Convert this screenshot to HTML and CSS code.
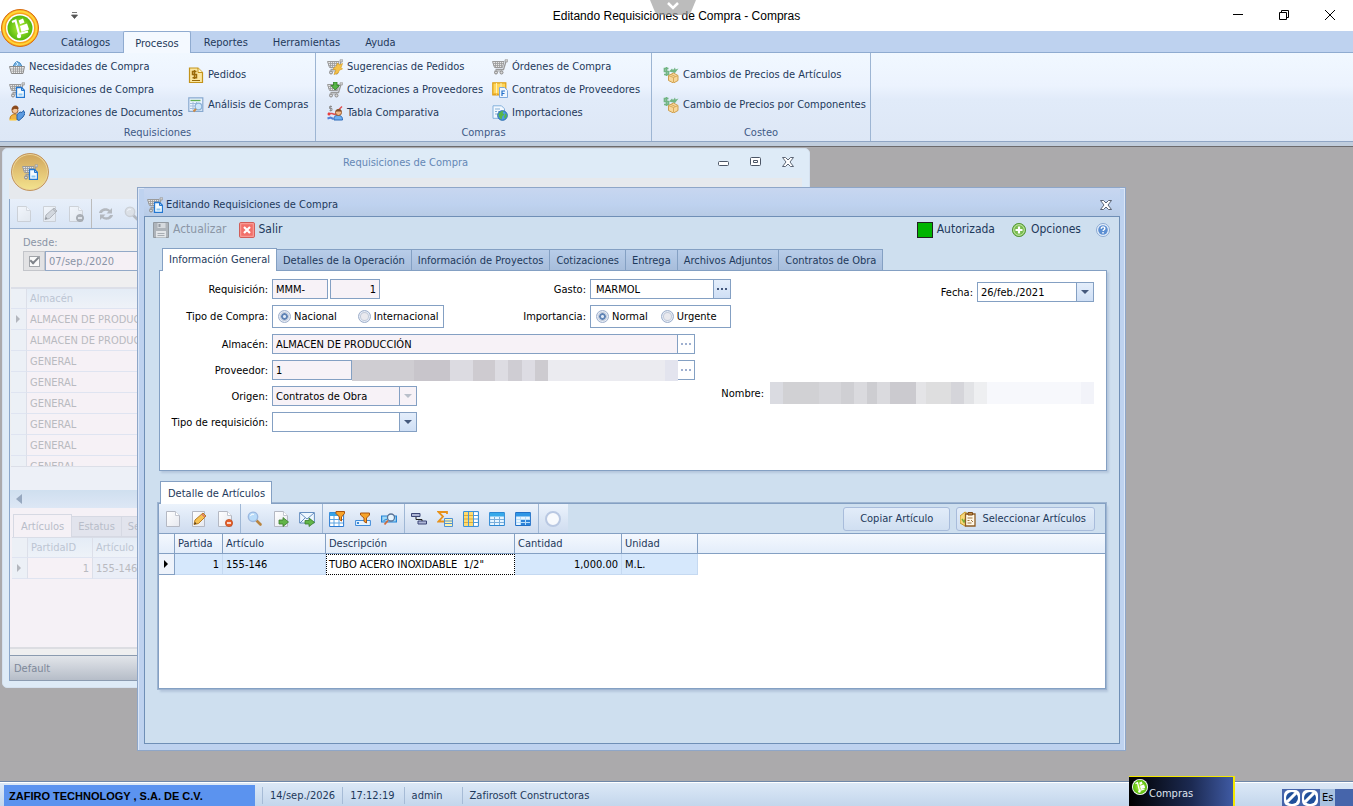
FILE: index.html
```html
<!DOCTYPE html>
<html lang="es">
<head>
<meta charset="utf-8">
<meta name="viewport" content="width=device-width, initial-scale=1">
<title>Editando Requisiciones de Compra - Compras</title>
<link rel="stylesheet" href="styles.css">
</head>
<body>
<svg class="defs" aria-hidden="true">
  <defs>
    <linearGradient id="page" x1="0" y1="0" x2="1" y2="1"><stop offset="0" stop-color="#fff"/><stop offset="1" stop-color="#e6e8ef"/></linearGradient>
    <radialGradient id="lime"><stop offset="0" stop-color="#b6f03a"/><stop offset="1" stop-color="#55b80c"/></radialGradient>
  </defs>
  <symbol id="cart" viewBox="0 0 16 16">
    <path d="M0.5 2.500h11.500l-1.500 6h-8z" fill="#e6e6e6" stroke="#9a9a9a"/>
    <path d="M1 4.500h10M1.500 6.500h9M3.500 3v5M5.500 3v5M7.500 3v5M9.500 3v5" stroke="#9a9a9a" stroke-width=".8"/>
    <path d="M14 2.500l-2.500 8h-8" fill="none" stroke="#9a9a9a" stroke-width="1.300"/><path d="M13 .8h2.800v2H13z" fill="#ddd" stroke="#9a9a9a" stroke-width=".8"/>
    <path d="M2.500 12h8" stroke="#b0b0b0" stroke-width="1.200"/>
    <circle cx="4" cy="13.500" r="1.500" fill="#d8d8d8" stroke="#888"/><circle cx="9.500" cy="13.500" r="1.500" fill="#d8d8d8" stroke="#888"/>
  </symbol>
  <symbol id="bluedoc" viewBox="0 0 16 16">
    <path d="M7.500 5.500h5l3 3v7h-8z" fill="#f4fbff" stroke="#2377d1" stroke-width="1.300"/>
    <path d="M12.500 5.500v3h3" fill="none" stroke="#2377d1"/><path d="M9.500 11.500h4v2h-4z" fill="#8cc8f5"/>
  </symbol>
  <symbol id="cartdoc" viewBox="0 0 16 16"><use href="#cart"/><use href="#bluedoc"/></symbol>
  <symbol id="basket" viewBox="0 0 16 16">
    <path d="M4 7.500l2-3.500 2-1.500 3 1.500 2 3.500" fill="#7cb6e4" stroke="#3f86bf"/><path d="M7 3l2 2-2 2" stroke="#d8efff" fill="none"/>
    <path d="M.5 7.500h15l-1.500 7h-11.500z" fill="#ececec" stroke="#8a8a8a"/>
    <path d="M2 10h13M2.500 12.200h11.500M4.500 8v6M6.500 8v6M8.500 8v6M10.500 8v6M12.500 8v6" stroke="#999" stroke-width=".8"/>
  </symbol>
  <symbol id="person" viewBox="0 0 16 16">
    <path d="M1 14.500c0-4 2-5 4.500-5s4.500 1 4.500 5z" fill="#f2b340" stroke="#c37d10"/>
    <circle cx="6" cy="5.500" r="3" fill="#f4c69a" stroke="#a0602c"/><path d="M2.500 5c0-3 2-4.500 4-4.500s3.500 2 3 3.500c-2.500.5-4-1-5 .5z" fill="#8a4a1e"/>
    <path d="M8 9.500l3-2.500 2 .5 1.500-2 1.500 3-2 3.500-4 3.500-2-1z" fill="#5c9be0" stroke="#2560a8"/><path d="M.5 14.800h7" stroke="#ffcb3d" stroke-width="1.500"/>
  </symbol>
  <symbol id="money" viewBox="0 0 16 16">
    <path d="M1.500 1h8.500l4.500 4.500v10h-13z" fill="#fbe6a0" stroke="#c3931b" stroke-width="1.200"/><path d="M10 1v4.500h4.500" fill="#fff5cf" stroke="#c3931b"/>
    <path d="M8.500 4.500H4.500v3h4v3.200h-4M6.500 3v9" fill="none" stroke="#9a6a08" stroke-width="1.500"/><path d="M4 13.500h8" stroke="#9a6a08"/>
  </symbol>
  <symbol id="analysis" viewBox="0 0 16 16">
    <path d="M.8.800h14v13.500h-14z" fill="#eaf4ff" stroke="#88a9cf" stroke-width="1.200"/><path d="M2.500 3.500h10" stroke="#5fb052" stroke-width="1.300"/>
    <path d="M2 6.500h11M2 9h11M2 11.500h11M5 5v8M8.500 5v8" stroke="#a2bcdb"/><circle cx="10.500" cy="9.500" r="3.300" fill="#cfe7fa" stroke="#8bb2d8" stroke-width="1.200"/>
    <path d="M8 12l-2.500 2.500" stroke="#cc8844" stroke-width="2"/>
  </symbol>
  <symbol id="cartbolt" viewBox="0 0 16 16"><use href="#cart"/><path d="M10.500 4l-1 3-3.500 3 3 1-2 4.500 4-1.500 1.500-3 3-1-1.500-1.500 1.500-4-3 1.500z" fill="#f5c24a" stroke="#dba026" stroke-width=".7"/></symbol>
  <symbol id="cartdown" viewBox="0 0 16 16"><use href="#cart"/><path d="M6.500 0h3.500v3.500h2.500L8.200 8 4 3.500h2.500z" fill="#57b546" stroke="#2d7d22" stroke-width=".8"/></symbol>
  <symbol id="compare" viewBox="0 0 16 16">
    <path d="M5 1.500H2.500V3.500H5V5.500H2.500M3.700.5v6" fill="none" stroke="#8a8a8a" stroke-width=".9"/>
    <path d="M1 8.500h4l3 1 4-5 3-3" stroke="#e05050" fill="none" stroke-width="1.500"/><circle cx="2" cy="9" r="1.500" fill="#e83c3c"/><path d="M.5 13.500l3-1 3 1.500" stroke="#5080d8" stroke-width="2" fill="none"/>
    <path d="M7 15c0-4 1-4.500 4-4.500s4.500 1 4.500 4.500z" fill="#6eb0f2" stroke="#2e6ab8"/><circle cx="11.500" cy="7.500" r="3" fill="#f2b98a" stroke="#9a5a28"/><path d="M8.500 6.500c.5-3 5.500-3.500 6.200 0z" fill="#87502a"/>
  </symbol>
  <symbol id="contract" viewBox="0 0 16 16"><path d="M.8.800h13v12h-13z" fill="#ffd65c" stroke="#dd9d10" stroke-width="1.200"/><path d="M4.500 1v12M9 1v7" stroke="#fff1b8"/><path d="M1.500 12h5" stroke="#e59a0c"/><path d="M7.500 5.500h5l3 3v7h-8z" fill="#eef6ff" stroke="#7ea9dc"/><path d="M10 14V9h3M10 11.500h2.500" stroke="#2470ca" stroke-width="1.200" fill="none"/></symbol>
  <symbol id="import" viewBox="0 0 16 16"><path d="M1 .8h8.500l3 3v9.500H1z" fill="#f2f8ff" stroke="#83b1dc"/><path d="M3 4h5M3 6.500h2M6 6.500h3M3 9h3" stroke="#84b0d5"/><circle cx="10.500" cy="10.500" r="4.800" fill="#4b9bea" stroke="#2466a8"/><path d="M6.500 9c2-3.500 5-3 5-3l-1 2 2 1.500-2 1.500-1 3.500c-2-1-3-3-3-5.500zM13.500 8l1.500 3-2 3-1-2z" fill="#59b548"/></symbol>
  <symbol id="pricebox" viewBox="0 0 16 16"><path d="M5.500 1.500H1.500v3h4v3h-4.500M3.500 0v9" fill="none" stroke="#72b584" stroke-width="1.700"/><path d="M6 4.500l3-3 1 1.500L12 .5l.5 2 3-1-3.500 4.500z" fill="#72b584"/><path d="M5.500 8.500l5-2.500 4.500 2.500v5l-4.500 2.500-5-2.500z" fill="#f8d79a" stroke="#c99743" stroke-width=".9"/><path d="M5.500 8.500l5 2L15 8.500M10.500 10.500v5M8 7.500l4.500 2" fill="none" stroke="#d7aa5a"/></symbol>
  <symbol id="mark" viewBox="5 5 28 28">
    <circle cx="19" cy="19" r="14" fill="#fff"/><circle cx="19" cy="19" r="12.500" fill="url(#lime)"/>
    <path d="M11 13l3.500-1.500 3.500 13.500 9-2.500" stroke="#fff" stroke-width="2.200" fill="none"/><path d="M17.500 11.500l4.500-2 1.500 4-4.500 1.800zM19 17l7-2.500 2 6-7.500 2.500z" fill="#fff"/><circle cx="18" cy="27" r="2.200" fill="#fff"/>
  </symbol>
  <symbol id="orb" viewBox="0 0 38 38">
    <circle cx="19" cy="19" r="18.500" fill="#f9a11b" stroke="#d86e10"/><circle cx="19" cy="19" r="16.500" fill="none" stroke="#ffd738" stroke-width="2"/>
    <use href="#mark" x="5" y="5" width="28" height="28"/>
  </symbol>
  <symbol id="save" viewBox="0 0 16 16"><path d="M.5.500h15v15H.5z" fill="#aeb4ba" stroke="#9299a0"/><path d="M4.500 1h8v5h-8z" fill="#d6dade"/><path d="M5.500 2h2v3h-2z" fill="#969ca3"/><path d="M3 9h10v6.500H3z" fill="#e3e6e9"/><path d="M4.500 11.500h7M4.500 13.500h7" stroke="#a7adb3"/></symbol>
  <symbol id="exit" viewBox="0 0 16 16"><rect x=".6" y=".6" width="14.800" height="14.800" rx="1" fill="#f2706a" stroke="#cf5550"/><rect x="1.700" y="1.700" width="12.600" height="12.600" fill="none" stroke="#fba6a0"/><path d="M5 5l6 6M11 5l-6 6" stroke="#fff" stroke-width="2.200"/></symbol>
  <symbol id="plus" viewBox="0 0 16 16"><circle cx="8" cy="8" r="6.600" fill="#79bd4f" stroke="#5a9a40"/><circle cx="8" cy="8" r="5.300" fill="none" stroke="#c3e3a6"/><path d="M8 4.500v7M4.500 8h7" stroke="#fff" stroke-width="2.200"/></symbol>
  <symbol id="help" viewBox="0 0 16 16"><circle cx="8" cy="8" r="6.500" fill="#e8f1fb" stroke="#8ba9d2"/><circle cx="8" cy="8" r="4.800" fill="#5c8fd2"/><path d="M6.300 6.700c0-2.500 3.600-2.300 3.500-.2 0 1.200-1.600 1.200-1.700 2.500M8 10v1.500" fill="none" stroke="#fff" stroke-width="1.400"/></symbol>
  <symbol id="new" viewBox="0 0 16 16"><path d="M1.500.500h9l4 4v11h-13z" fill="url(#page)" stroke="#b4b8c3"/><path d="M10.500.500v4h4" fill="#fff" stroke="#c3c6d0"/></symbol>
  <symbol id="edit" viewBox="0 0 16 16"><path d="M1.500.500h12v15h-12z" fill="url(#page)" stroke="#b3b7c2"/><path d="M4 9l8-7 3 3-7.500 7.500L3 13.500z" fill="#f6c253" stroke="#b77c22"/><path d="M11 3l3 3" stroke="#d77568" stroke-width="1.500"/><path d="M3 13.500l1-2.500 1.500 1.500z" fill="#4b3620"/></symbol>
  <symbol id="remove" viewBox="0 0 16 16"><use href="#new"/><circle cx="12" cy="12" r="3.600" fill="#e7602a" stroke="#b94315" stroke-width=".7"/><path d="M10 12h4" stroke="#fff" stroke-width="1.500"/></symbol>
  <symbol id="search" viewBox="0 0 16 16"><path d="M9.500 9.500l4 4" stroke="#b9843f" stroke-width="2.600" stroke-linecap="round"/><circle cx="6" cy="5.800" r="4.700" fill="#b9dcfa" stroke="#9bb8e0" stroke-width="1.400"/><path d="M3.500 5c.5-2 2.500-2 3.500-1.500" fill="none" stroke="#fff"/></symbol>
  <symbol id="export" viewBox="0 0 16 16"><use href="#new"/><path d="M6 9h4V6.500L15.500 11 10 15.500V13H6z" fill="#62b548" stroke="#3a7c2b" stroke-width=".8"/></symbol>
  <symbol id="mail" viewBox="0 0 16 16"><path d="M.6 1.500h14.800v10.500H.6z" fill="#eef7ff" stroke="#678fbf"/><path d="M1 2l7 6 7-6M1 12l5-5M15 12l-5-5" fill="none" stroke="#678fbf"/><path d="M6 9.500h4V7l5.500 4.300-5.500 4.200V13H6z" fill="#62b548" stroke="#3a7c2b" stroke-width=".8"/></symbol>
  <symbol id="gridfilter" viewBox="0 0 16 16"><path d="M.6 1.500h14v14H.6z" fill="#fff" stroke="#2b7bd2"/><path d="M.6 1.500h14v3.500H.6z" fill="#36a2e8"/><path d="M5 5v10M10 5v10M1 8.500h13M1 12h13" stroke="#5ba3e2"/><path d="M7 .5h8.500v2L12.500 6v4l-2-1.500V6L7 2.500z" fill="#f6a32a" stroke="#a95410"/></symbol>
  <symbol id="rowfilter" viewBox="0 0 16 16"><path d="M.6 9.500h14.800v5H.6z" fill="#e6f4ff" stroke="#3f8bd8"/><path d="M2 11l2 2M4 11l-2 2" stroke="#3f8bd8"/><path d="M5.500 2h9v2l-3 3v5l-2.500-1.500V7l-3.500-3z" fill="#f6a32a" stroke="#a95410"/></symbol>
  <symbol id="rowsearch" viewBox="0 0 16 16"><path d="M.6 5h14.800v6H.6z" fill="#9fd9f8" stroke="#2584d5" stroke-width="1.200"/><path d="M2.500 9.500l4-1.500" stroke="#2584d5"/><circle cx="10" cy="6.500" r="3.500" fill="#e6f5ff" stroke="#5a7295" stroke-width="1.300"/><path d="M7 9.500L3.500 13.500" stroke="#d36a38" stroke-width="1.800"/></symbol>
  <symbol id="links" viewBox="0 0 16 16"><path d="M.5 2.500h8.500v3H.5z" fill="#aeb6d6" stroke="#3b4576"/><path d="M7 10h8.500v3H7z" fill="#aeb6d6" stroke="#3b4576"/><path d="M5 6v2.500h6V10" fill="none" stroke="#222"/></symbol>
  <symbol id="sum" viewBox="0 0 16 16"><path d="M10 3V1H1.500L6 5.500 1.500 10.500H7" fill="none" stroke="#e8921a" stroke-width="1.800"/><path d="M7.500 7.500h8v8h-8z" fill="#fff5b0" stroke="#5091d3"/><path d="M8 10h7M8 12.500h7" stroke="#5091d3"/></symbol>
  <symbol id="cols" viewBox="0 0 16 16"><path d="M.6.600h14.800v14.800H.6z" fill="#fff" stroke="#2b87d3"/><path d="M1 1h9.500v14H1z" fill="#ffdb6f"/><path d="M1 4.500h9.500M1 8h9.500M1 11.500h9.500" stroke="#dca93a"/><path d="M10.500 4.500H15M10.500 8H15M10.500 11.500H15M5.500 1v14M10.500 1v14" stroke="#4b98d8"/></symbol>
  <symbol id="grid" viewBox="0 0 16 16"><path d="M.6 1.500h14.800v13H.6z" fill="#e7f5ff" stroke="#2b87d3"/><path d="M1 2h14v3.500H1z" fill="#36a9ea"/><path d="M5.500 6v8M10.500 6v8M1 8.500h14M1 11.500h14" stroke="#7aaedb"/></symbol>
  <symbol id="grid2" viewBox="0 0 16 16"><path d="M.6 1.500h14.800v13H.6z" fill="#e7f5ff" stroke="#1f6fc6"/><path d="M1 2h14v3.500H1z" fill="#2e96e6"/><path d="M5.500 8h9.500v6H5.500z" fill="#2e83d8"/><path d="M5.500 6v8M10.500 6v8M1 8.500h14M1 11.500h14" stroke="#b9ddf9"/></symbol>
  <symbol id="ring" viewBox="0 0 16 16"><circle cx="8" cy="8" r="7" fill="#f8fafd" stroke="#b9c8e2" stroke-width="2"/></symbol>
  <symbol id="refresh" viewBox="0 0 16 16"><path d="M1 7c1-5 8-6 11-3l2-2v5.500H8.500l2-2C8.500 4 5 4.500 4 7zM15 9c-1 5-8 6-11 3l-2 2V8.500h5.500l-2 2C7.500 12 11 11.500 12 9z" fill="#85878c"/></symbol>
  <symbol id="clip" viewBox="0 0 16 16"><path d="M0 5l5-4 5 3v9l-5 2-5-3z" fill="#f8d878" stroke="#c99a26"/><path d="M2 8l2 3 2-4" stroke="#7bae3b" fill="none" stroke-width="1.500"/><path d="M5.500 3h9.500v12H5.500z" fill="#fff8e8" stroke="#8e5c24" stroke-width="1.300"/><path d="M8 1.500h4.500v2.500H8z" fill="#c08a48" stroke="#7b4a18"/><path d="M7.500 7h5M7.500 9.500h2M11 9l2 2M7.500 12h4" stroke="#a0743e"/></symbol>
  <symbol id="down" viewBox="0 0 8 4"><path d="M0 0h8L4 4z" fill="currentColor"/></symbol>
  <symbol id="dots" viewBox="0 0 11 2"><path d="M0 0h2v2H0zM4 0h2v2H4zM8 0h2v2H8z" fill="currentColor"/></symbol>
  <symbol id="closex" viewBox="0 0 12 10"><path d="M.5.500h3L6 3 8.500.500h3L8 5l3.500 4.500h-3L6 7 3.500 9.500h-3L4 5z" fill="#fff" stroke="#4c5666" stroke-width=".9"/></symbol>
  <symbol id="flag" viewBox="0 0 16 16"><rect width="16" height="16" rx="5" fill="#fff"/><circle cx="8" cy="8" r="6" fill="#1f4f9a"/><path d="M3 12l9-9" stroke="#fff" stroke-width="3"/></symbol>
</svg>

<header class="titlebar">
  <button class="quick" aria-label="Personalizar"><svg width="7" height="7" viewBox="0 0 7 7"><path d="M1 .5h5M.5 3h6l-3 3.500z" stroke="#555" fill="#555" stroke-width=".8"/></svg></button>
  <h1>Editando Requisiciones de Compra - Compras</h1>
  <div class="sysbuttons">
    <button aria-label="Minimizar"><svg width="12" height="12"><path d="M1 4.500h10" stroke="#000"/></svg></button>
    <button aria-label="Restaurar"><svg width="12" height="12"><path d="M1.500 2.500h7v7h-7zM3.500 2.500v-2h7v7h-2" fill="none" stroke="#000"/></svg></button>
    <button aria-label="Cerrar"><svg width="12" height="12"><path d="M1 0l10 10M11 0L1 10" stroke="#000"/></svg></button>
  </div>
  <svg class="pull" width="46" height="15" viewBox="0 0 46 15"><path d="M0 0h46l-5 12q-2 3-5 3H10q-3 0-5-3z" fill="#999" fill-opacity=".66"/><path d="M18 3l5 5 5-5" fill="none" stroke="#fff" stroke-width="2.500"/></svg>
  <button class="orb" aria-label="Compras"><svg width="38" height="38"><use href="#orb"/></svg></button>
</header>

<nav class="ribbon-tabs">
  <a href="#">Catálogos</a><a href="#" class="active">Procesos</a><a href="#">Reportes</a><a href="#">Herramientas</a><a href="#">Ayuda</a>
</nav>

<section class="ribbon">
  <div class="group g1">
    <div class="cols">
      <div class="col"><button><svg><use href="#basket"/></svg>Necesidades de Compra</button><button><svg><use href="#cartdoc"/></svg>Requisiciones de Compra</button><button><svg><use href="#person"/></svg>Autorizaciones de Documentos</button></div>
      <div class="col two"><button><svg><use href="#money"/></svg>Pedidos</button><button><svg><use href="#analysis"/></svg>Análisis de Compras</button></div>
    </div>
    <h2>Requisiciones</h2>
  </div>
  <div class="group g2">
    <div class="cols">
      <div class="col"><button><svg><use href="#cartbolt"/></svg>Sugerencias de Pedidos</button><button><svg><use href="#cartdown"/></svg>Cotizaciones a Proveedores</button><button><svg><use href="#compare"/></svg>Tabla Comparativa</button></div>
      <div class="col"><button><svg><use href="#cart"/></svg>Órdenes de Compra</button><button><svg><use href="#contract"/></svg>Contratos de Proveedores</button><button><svg><use href="#import"/></svg>Importaciones</button></div>
    </div>
    <h2>Compras</h2>
  </div>
  <div class="group g3">
    <div class="cols">
      <div class="col two"><button><svg><use href="#pricebox"/></svg>Cambios de Precios de Artículos</button><button><svg><use href="#pricebox"/></svg>Cambio de Precios por Componentes</button></div>
    </div>
    <h2>Costeo</h2>
  </div>
</section>

<main class="desktop">
  <section class="window list-window">
    <header class="list-head">
      <span class="badge"><svg><use href="#cartdoc"/></svg></span>
      <h2>Requisiciones de Compra</h2>
      <div class="wbuttons">
        <button aria-label="Minimizar"><svg width="12" height="10"><rect x=".5" y="4.500" width="10" height="4" rx="1" fill="#fff" stroke="#4c5666"/></svg></button>
        <button aria-label="Maximizar"><svg width="12" height="10"><rect x=".5" y=".5" width="10" height="8" rx="1" fill="#fff" stroke="#4c5666"/><path d="M3.500 3.500h4v2h-4z" fill="none" stroke="#4c5666"/></svg></button>
        <button aria-label="Cerrar"><svg width="12" height="10"><use href="#closex"/></svg></button>
      </div>
    </header>
    <div class="list-body">
      <div class="list-tools">
        <div class="tg"><button aria-label="Nuevo"><svg><use href="#new"/></svg></button><button aria-label="Editar"><svg><use href="#edit"/></svg></button><button aria-label="Eliminar"><svg><use href="#remove"/></svg></button></div>
        <div class="tg"><button aria-label="Refrescar"><svg><use href="#refresh"/></svg></button><button aria-label="Buscar"><svg><use href="#search"/></svg></button></div>
      </div>
      <div class="range">
        <label for="desde">Desde:</label>
        <div class="range-row"><span class="tick"><input type="checkbox" checked aria-label="Usar fecha"></span><input id="desde" type="text" value="07/sep./2020"></div>
      </div>
      <div class="list-grid">
        <table>
          <thead><tr><th class="ind"></th><th>Almacén</th></tr></thead>
          <tbody>
            <tr><td class="ind"><i class="tri"></i></td><td>ALMACEN DE PRODUCCIÓN</td></tr>
            <tr><td class="ind"></td><td>ALMACEN DE PRODUCCIÓN</td></tr>
            <tr><td class="ind"></td><td>GENERAL</td></tr>
            <tr><td class="ind"></td><td>GENERAL</td></tr>
            <tr><td class="ind"></td><td>GENERAL</td></tr>
            <tr><td class="ind"></td><td>GENERAL</td></tr>
            <tr><td class="ind"></td><td>GENERAL</td></tr>
            <tr><td class="ind"></td><td>GENERAL</td></tr>
          </tbody>
        </table>
      </div>
      <div class="list-gap"></div>
      <div class="hscroll"><svg width="6" height="10" viewBox="0 0 6 10"><path d="M6 0v10L0 5z" fill="#97a8bf"/></svg></div>
      <div class="list-detail">
        <div class="dtabs"><button class="active">Artículos</button><button>Estatus</button><button>Seguimiento</button></div>
        <table>
          <thead><tr><th class="ind"></th><th class="pid">PartidaID</th><th>Artículo</th></tr></thead>
          <tbody><tr><td class="ind"><i class="tri"></i></td><td class="pid">1</td><td class="sel">155-146</td></tr></tbody>
        </table>
      </div>
      <footer>Default</footer>
    </div>
  </section>

  <section class="window edit-window">
    <header class="edit-head">
      <svg width="16" height="16"><use href="#cartdoc"/></svg>
      <h2>Editando Requisiciones de Compra</h2>
      <button aria-label="Cerrar"><svg width="12" height="10"><use href="#closex"/></svg></button>
    </header>
    <div class="edit-body">
      <div class="actions">
        <button disabled><svg><use href="#save"/></svg>Actualizar</button>
        <button><svg><use href="#exit"/></svg>Salir</button>
        <span class="status"><i></i>Autorizada</span>
        <button><svg><use href="#plus"/></svg>Opciones</button>
        <button aria-label="Ayuda"><svg><use href="#help"/></svg></button>
      </div>

      <div class="tabs">
        <button class="active">Información General</button><button>Detalles de la Operación</button><button>Información de Proyectos</button><button>Cotizaciones</button><button>Entrega</button><button>Archivos Adjuntos</button><button>Contratos de Obra</button>
      </div>
      <form class="panel">
        <label class="lab left r1" for="serie">Requisición:</label>
        <div class="pair field r1"><input id="serie" class="ro" type="text" value="MMM-" readonly><input class="ro num" type="text" value="1" readonly aria-label="Número"></div>
        <label class="lab mid r1" for="gasto">Gasto:</label>
        <div class="combo second r1"><input id="gasto" type="text" value="MARMOL"><button type="button" aria-label="Buscar gasto"><svg width="11" height="2"><use href="#dots"/></svg></button></div>

        <span class="lab left r2">Tipo de Compra:</span>
        <div class="radios wide field r2"><label><input type="radio" name="tipo" checked>Nacional</label><label><input type="radio" name="tipo">Internacional</label></div>
        <span class="lab mid r2">Importancia:</span>
        <div class="radios second r2"><label><input type="radio" name="imp" checked>Normal</label><label><input type="radio" name="imp">Urgente</label></div>

        <label class="lab left r3" for="almacen">Almacén:</label>
        <div class="combo span soft r3"><input id="almacen" class="ro" type="text" value="ALMACEN DE PRODUCCIÓN" readonly><button type="button" aria-label="Buscar almacén"><svg width="11" height="2"><use href="#dots"/></svg></button></div>

        <label class="lab left r4" for="prov">Proveedor:</label>
        <div class="combo span soft prov r4"><input id="prov" class="ro" type="text" value="1" readonly><span class="mosaic m1"></span><button type="button" aria-label="Buscar proveedor"><svg width="11" height="2"><use href="#dots"/></svg></button></div>

        <label class="lab left r5" for="origen">Origen:</label>
        <div class="combo pick off r5"><select id="origen" disabled><option>Contratos de Obra</option></select><span class="arrow"><svg width="8" height="4"><use href="#down"/></svg></span></div>

        <label class="lab left r6" for="tiporeq">Tipo de requisición:</label>
        <div class="combo pick r6"><select id="tiporeq"><option></option></select><span class="arrow"><svg width="8" height="4"><use href="#down"/></svg></span></div>

        <div class="fecha"><label for="fecha">Fecha:</label><div class="combo"><input id="fecha" type="text" value="26/feb./2021"><button type="button" aria-label="Calendario"><svg width="8" height="4"><use href="#down"/></svg></button></div></div>
        <div class="nombre"><span>Nombre:</span><span class="mosaic m2"></span></div>
      </form>

      <div class="tabs detail-tabs"><button class="active">Detalle de Artículos</button></div>
      <div class="detail">
        <div class="toolbar">
          <div class="tg"><button aria-label="Nuevo"><svg><use href="#new"/></svg></button><button aria-label="Editar"><svg><use href="#edit"/></svg></button><button aria-label="Eliminar"><svg><use href="#remove"/></svg></button></div>
          <div class="tg"><button aria-label="Ver"><svg><use href="#search"/></svg></button><button aria-label="Exportar"><svg><use href="#export"/></svg></button><button aria-label="Enviar"><svg><use href="#mail"/></svg></button></div>
          <div class="tg"><button aria-label="Filtro"><svg><use href="#gridfilter"/></svg></button><button aria-label="Fila de filtro"><svg><use href="#rowfilter"/></svg></button><button aria-label="Buscar en filas"><svg><use href="#rowsearch"/></svg></button></div>
          <div class="tg"><button aria-label="Agrupar"><svg><use href="#links"/></svg></button><button aria-label="Totales"><svg><use href="#sum"/></svg></button><button aria-label="Columnas"><svg><use href="#cols"/></svg></button><button aria-label="Vista"><svg><use href="#grid"/></svg></button><button aria-label="Vista detallada"><svg><use href="#grid2"/></svg></button></div>
          <div class="tg"><button aria-label="Estado"><svg><use href="#ring"/></svg></button></div>
          <div class="cmds"><button class="cmd copy">Copiar Artículo</button><button class="cmd"><svg><use href="#clip"/></svg><span>Seleccionar Artículos</span></button></div>
        </div>
        <table class="items">
          <colgroup><col class="c0"><col class="c1"><col class="c2"><col class="c3"><col class="c4"><col class="c5"><col></colgroup>
          <thead><tr><th></th><th>Partida</th><th>Artículo</th><th>Descripción</th><th>Cantidad</th><th>Unidad</th><th></th></tr></thead>
          <tbody><tr><td class="ind"><i class="tri"></i></td><td class="r">1</td><td>155-146</td><td class="focus">TUBO ACERO INOXIDABLE&nbsp; 1/2"</td><td class="r">1,000.00</td><td>M.L.</td><td class="rest"></td></tr></tbody>
        </table>
      </div>
    </div>
  </section>
</main>

<footer class="statusbar">
  <strong>ZAFIRO TECHNOLOGY , S.A. DE C.V.</strong>
  <span>14/sep./2026</span><span>17:12:19</span><span class="user">admin</span><span class="product">Zafirosoft Constructoras</span>
  <button class="task"><svg width="16" height="16"><use href="#mark"/></svg>Compras</button>
  <div class="lang"><svg><use href="#flag"/></svg><svg><use href="#flag"/></svg><span>Es</span></div>
</footer>
</body>
</html>
```

FILE: styles.css
```css
:root {
  --ui: "DejaVu Sans Condensed", "Liberation Sans", sans-serif;
  --plain: "Liberation Sans", Arial, sans-serif;
  --ink: #1e395b;
  --line: #84a0c3;
}

* { box-sizing: border-box; }

body {
  margin: 0;
  height: 100vh;
  display: flex;
  flex-direction: column;
  overflow: hidden;
  font: 11px/17px var(--ui);
  color: var(--ink);
  background: #abaaac;
}

button, input, select { font: inherit; color: inherit; margin: 0; border-radius: 0; }
button { background: none; border: 0; padding: 0; }
h1, h2 { margin: 0; font-weight: normal; font-size: 11px; }
table { border-collapse: separate; border-spacing: 0; table-layout: fixed; width: 100%; }
th { font-weight: normal; text-align: left; }
svg { display: block; flex: none; }
.defs { position: absolute; width: 0; height: 0; }

/* Application title */
.titlebar {
  position: relative;
  display: grid;
  grid-template-columns: 1fr auto 1fr;
  align-items: center;
  height: 31px;
  background: #fff;
  flex: none;
}
.titlebar h1 { font: 12px/16px var(--plain); color: #000; }
.quick { justify-self: start; margin-left: 71px; }
.sysbuttons { justify-self: end; display: flex; gap: 34px; padding-right: 17px; }
.pull { position: absolute; top: 0; left: calc(50% - 27px); }
.orb { position: absolute; left: 1px; top: 9px; z-index: 3; }

/* Ribbon */
.ribbon-tabs {
  display: flex;
  align-items: flex-end;
  gap: 1px;
  height: 22px;
  padding-left: 49px;
  background: #bed2ef;
  border-bottom: 1px solid #8fabd0;
  flex: none;
}
.ribbon-tabs a {
  height: 20px;
  padding: 0 12px;
  line-height: 21px;
  color: var(--ink);
  text-decoration: none;
}
.ribbon-tabs .active {
  height: 22px;
  padding: 0 11px;
  line-height: 23px;
  margin-bottom: -1px;
  background: #f4f9ff;
  border: 1px solid #8fabd0;
  border-bottom: 0;
  border-radius: 2px 2px 0 0;
}
.ribbon {
  display: flex;
  height: 94px;
  flex: none;
  background: linear-gradient(#f1f8ff, #ecf3fe 35%, #e1ebf9 50%, #dde7f6 88px, #8fa5c4 88px, #8fa5c4 89px, #c0cddd 89px);
  border-bottom: 1px solid #6c6a6c;
}
.group {
  display: flex;
  flex-direction: column;
  height: 88px;
  padding-top: 2px;
  border-right: 1px solid #9db5d3;
}
.g1 { width: 316px; }
.g2 { width: 336px; }
.g3 { width: 219px; }
.cols { display: flex; height: 70px; padding-left: 9px; }
.g2 .cols, .g3 .cols { padding-left: 11px; }
.g1 .col:first-child { width: 179px; }
.g2 .col:first-child { width: 165px; }
.col { display: flex; flex-direction: column; }
.col.two { justify-content: center; gap: 7px; }
.col button {
  display: flex;
  align-items: center;
  gap: 4px;
  height: 23px;
  white-space: nowrap;
}
.col svg { width: 16px; height: 16px; }
.group h2 { text-align: center; color: #3e5a86; }

/* MDI area */
.desktop { position: relative; flex: 1; min-height: 0; overflow: hidden; background: #abaaac; }
.window { position: absolute; display: flex; flex-direction: column; }

/* List window (inactive) */
.list-window {
  left: 2px;
  top: 1px;
  width: 808px;
  height: 540px;
  padding: 0 7px 6px 6px;
  border-radius: 5px;
  border: 1px solid #d5e1ef;
  background: #deebf7;
  color: #98a2b0;
}
.list-head {
  display: grid;
  grid-template-columns: 1fr auto 1fr;
  height: 50px;
  flex: none;
  background: linear-gradient(#deebf7 29px, #e6e9ed 29px);
}
.list-head h2 { line-height: 27px; color: #6487b5; }
.badge {
  display: grid;
  place-items: center;
  width: 38px;
  height: 38px;
  margin: 4px 0 0 2px;
  border: 1px solid #c2935c;
  border-radius: 50%;
  background: linear-gradient(#cfa55c, #e5c777 55%, #f3e38e);
  box-shadow: inset 0 0 0 1px #ecd698;
}
.badge svg { width: 16px; height: 16px; }
.wbuttons { display: flex; justify-content: flex-end; gap: 20px; padding: 8px 8px 0 0; align-items: flex-start; }
.list-body { flex: 1; display: flex; flex-direction: column; border-left: 1px solid #8ba7ca; background: #efeff0; }
.list-tools { display: flex; height: 30px; flex: none; background: linear-gradient(#e7effa, #d9e5f5); border-bottom: 1px solid #9cb3d1; }
.list-tools .tg { border-right: 1px solid #a9bfdb; filter: grayscale(1); }
.list-tools svg { opacity: .5; }
.tg { display: flex; align-items: center; padding: 0 2px 0 1px; }
.tg button { width: 26px; height: 26px; display: grid; place-items: center; }
.tg svg { width: 16px; height: 16px; }
.range { height: 58px; padding: 5px 0 0 13px; flex: none; color: #8a94a6; }
.range-row { display: flex; }
.range-row > input { width: 180px; height: 20px; padding: 0 3px; border: 1px solid #93a9c7; background: #f5f0f5; }
.tick { width: 22px; height: 20px; display: grid; place-items: center; background: #e2e2e4; border: 1px solid #c3c5ca; }
.tick input { appearance: none; width: 11px; height: 11px; border: 1px solid #a2a5aa; background: #fafafa; display: grid; place-items: center; }
.tick input:checked::after { content: ""; width: 7px; height: 3px; border: solid #7f838a; border-width: 0 0 2px 2px; transform: rotate(-45deg); margin-top: -3px; }
.list-grid { height: 180px; flex: none; overflow: hidden; margin-left: 1px; border-top: 2px solid #dcdfe8; border-bottom: 1px solid #dcdfe8; color: #b9bac0; }
.list-window th, .list-window td { height: 21px; padding: 0 3px; border-right: 1px solid #dcdfe9; border-bottom: 1px solid #dfe4f1; background: #f6f1f6; }
.list-window th { height: 20px; background: linear-gradient(#e4ecf6, #eef2f8); color: #bcc5d3; }
.list-window .ind { width: 16px; background: #ecf0f6; padding: 0 5px; }
.tri { display: block; width: 0; height: 0; border: solid transparent; border-width: 4px 0 4px 4px; border-left-color: #b3b6bd; }
.list-gap { height: 23px; background: #edf0f7; flex: none; }
.hscroll { height: 18px; flex: none; display: flex; align-items: center; padding-left: 6px; background: linear-gradient(#cfdfef, #dde7f5); }
.list-detail { flex: 1; padding: 7px 0 0 2px; margin-bottom: 6px; background: #f5f1f6; border-bottom: 2px solid #dcdde2; }
.dtabs { display: flex; align-items: flex-end; height: 23px; padding-left: 1px; color: #b8bdc9; border-bottom: 1px solid #d9dde7; }
.dtabs button { height: 21px; padding: 0 6px; background: #e2e4ed; border: 1px solid #d6d9e3; border-left: 0; }
.dtabs .active { height: 23px; border-left: 1px solid #d6d9e3; background: #f5f1f6; border-bottom: 0; padding: 0 7px; }
.list-detail table { color: #b9bac0; }
.list-window .pid { width: 65px; }
.list-window td.pid { text-align: right; }
.list-window .sel { background: #eaeef7; }
.list-body footer { height: 26px; flex: none; padding-left: 4px; line-height: 25px; color: #7d8899; background: linear-gradient(#e2e5ea, #b6bdc8); border: solid #8b9bb0; border-width: 1px 0; }

/* Editor window */
.edit-window {
  left: 137px;
  top: 40px;
  width: 989px;
  height: 564px;
  padding: 0 5px 6px 6px;
  border: 1px solid #8ea6c8;
  box-shadow: inset 1px 1px 0 #dbe6f6, inset -1px 0 0 #dbe6f6;
  background: #bed2ef;
}
.edit-head { display: flex; align-items: center; height: 28px; padding: 5px 8px 0 3px; flex: none; gap: 3px; background: linear-gradient(#c7d6f0 1px, #bed2ef 60%, #b8cbe5); }
.edit-head h2 { flex: 1; }
.edit-body { flex: 1; display: flex; flex-direction: column; padding: 0 12px 54px 12px; background: #cedfef; border: 1px solid #6f8fb6; }
.actions { display: flex; align-items: center; height: 25px; margin-left: -4px; font-size: 12px; flex: none; }
.actions button, .status { display: flex; align-items: center; gap: 4px; }
.actions svg { width: 16px; height: 16px; }
.actions button:nth-child(1) { margin-right: 12px; color: #8b96a5; }
.actions button:nth-child(4) { margin: 0 14px 0 16px; }
.actions button:nth-child(5) { margin-right: -4px; }
.status { margin-left: auto; }
.status i { width: 16px; height: 16px; background: #00b400; border: 1px solid #222; }

.tabs { display: flex; align-items: flex-end; height: 28px; padding-left: 5px; flex: none; }
.tabs button { height: 21px; padding: 0 6px; background: linear-gradient(#b8cde9, #a7bddb); border: 1px solid var(--line); border-left: 0; border-bottom: 0; white-space: nowrap; }
.tabs .active { height: 23px; margin-bottom: -1px; padding-bottom: 1px; background: #fff; border-left: 1px solid var(--line); z-index: 1; }

.panel {
  display: grid;
  grid-template-columns: 108px 172px 138px 141px 1fr;
  grid-template-rows: 20px 23px repeat(4, 20px);
  column-gap: 4px;
  row-gap: 6px;
  height: 201px;
  flex: none;
  margin-left: 2px;
  padding: 8px 12px 0 0;
  background: #fff;
  border: 1px solid var(--line);
  box-shadow: 2px 2px 2px #b4c6dc;
  color: #000;
}
.r1 { grid-row: 1; } .r2 { grid-row: 2; } .r3 { grid-row: 3; }
.r4 { grid-row: 4; } .r5 { grid-row: 5; } .r6 { grid-row: 6; }
.lab { text-align: right; align-self: center; white-space: nowrap; }
.left { grid-column: 1; }
.field { grid-column: 2; }
.mid { grid-column: 3; }
.second { grid-column: 4; }
.panel input[type=text], .panel select { height: 20px; min-width: 0; padding: 0 3px; border: 1px solid var(--line); background: #fff; color: #000; }
.panel input.ro { background: #f7f2f7; }
.panel input.num { text-align: right; }
.pair { display: flex; gap: 2px; }
.pair input:first-child { width: 56px; }
.pair input:last-child { width: 50px; }
.combo { display: flex; }
.combo input { flex: 1; }
#gasto { padding-left: 5px; }
.combo button, .arrow { display: grid; place-items: center; width: 17px; height: 20px; border: 1px solid var(--line); border-left: 0; background: linear-gradient(#e4eefb, #cfdff5); color: #45597d; flex: none; }
.soft button { background: #fff; color: #9fb0d0; }
.span { grid-column: 2 / 5; width: 423px; }
.prov #prov { flex: none; width: 80px; }
.prov .mosaic { flex: 1; height: 21px; }
.pick { grid-column: 2; width: 145px; }
.pick select { flex: 1; appearance: none; opacity: 1; border-radius: 0; }
.off select, .off .arrow { background: #f7f2f7; color: #000; }
.off .arrow { color: #b9bfca; }
.radios { display: flex; align-items: center; gap: 13px; padding-left: 5px; border: 1px solid var(--line); white-space: nowrap; }
.radios.wide { gap: 21px; }
.radios label { display: flex; align-items: center; gap: 3px; }
.radios input { appearance: none; width: 13px; height: 13px; border: 1px solid #9fb0cc; border-radius: 50%; background: #e9e9ee; box-shadow: inset 0 0 0 1px #e6edf8, inset 0 0 0 2px #c2cad8; }
.radios input:checked { background: radial-gradient(circle, #dfe9f7 1px, #5f83b5 2px, #5f83b5 3px, #f0f5fc 4px); }
.fecha, .nombre { display: flex; gap: 4px; align-items: center; justify-self: end; }
.fecha { grid-column: 5; grid-row: 1 / 3; align-self: start; padding-top: 3px; }
.fecha .combo { width: 117px; }
.nombre { grid-column: 4 / 6; grid-row: 4 / 6; align-self: end; gap: 6px; padding-bottom: 2px; }
.m1 { background: linear-gradient(90deg, #cfcdd2 0 19%, #c8c5cb 19% 30%, #dcdbe1 30% 37%, #cecbd0 37% 44%, #dddce2 44% 48%, #cfcdd3 48% 52%, #dddce3 52% 56%, #cdcbd0 56% 60%, #ebebf0 60% 96%, #e3e4ee 96%); }
.m2 { width: 324px; height: 22px; background: linear-gradient(90deg, #dadbe1 0 4%, #d1d1d4 4% 15%, #d6d6da 15% 22%, #cfcfd3 22% 26%, #dadade 26% 30%, #cdcdd1 30% 33%, #dadade 33% 37%, #cbcacf 37% 45%, #e4e4e7 45% 48%, #dededf 48% 56%, #d5d5da 56% 60%, #e2e3e6 60% 63%, #eeeff1 63% 67%, #f7f8fc 67% 96%, #f2f3f9 96%); }

.detail-tabs { margin-top: 9px; height: 23px; padding-left: 3px; }
.detail-tabs .active { padding: 0 6px 0 7px; }
.detail { flex: 1; display: flex; flex-direction: column; background: #fff; border: 1px solid var(--line); outline: 1px solid #9eb5d1; margin: 0 1px; box-shadow: 2px 3px 2px #b4c6dc; }
.toolbar { display: flex; height: 29px; background: #cedfef; flex: none; }
.toolbar .tg { background: linear-gradient(#ecf3fc, #dbe6f5 55%, #cfdcef); border-right: 1px solid #9fb7d5; }
.toolbar .tg:nth-child(5) { border-right: 0; }
.cmds { display: flex; align-items: center; gap: 6px; margin-left: auto; padding-right: 10px; }
.cmd { display: flex; align-items: center; justify-content: center; height: 24px; padding: 0 8px 0 3px; gap: 6px; color: var(--ink); background: linear-gradient(#e2ecf9, #d0dff1); border: 1px solid #a8bcdb; border-radius: 3px; white-space: nowrap; }
.cmd svg { width: 16px; height: 16px; }
.cmd.copy { padding: 0 16px; }
.items .c0 { width: 16px; } .items .c1 { width: 48px; } .items .c2 { width: 103px; }
.items .c3 { width: 189px; } .items .c4 { width: 107px; } .items .c5 { width: 76px; }
.items th, .items td { height: 21px; padding: 0 3px; }
.items th { background: linear-gradient(#f4f8fe, #e3edfa); border: solid var(--line); border-width: 1px 1px 1px 0; }
.items th:last-child { border-right: 0; }
.items td { color: #000; background: #d6e8fc; border-right: 1px solid #c5d9f1; border-bottom: 1px solid #c5d9f1; }
.items .ind { background: #eef3fb; border-color: var(--line); padding: 0 5px; }
.items .tri { border-left-color: #000; }
.items .r { text-align: right; }
.items .focus { background: #fff; border: 1px dotted #000; padding-left: 2px; white-space: nowrap; }
.items .rest { background: #fff; border: 0; }

/* Status bar */
.statusbar {
  position: relative;
  display: flex;
  align-items: center;
  height: 25px;
  flex: none;
  padding: 3px 0 0 4px;
  border-top: 1px solid #6f87a8;
  box-shadow: inset 0 1px 0 #fff;
  background: linear-gradient(#dde9f7, #c3d6ec);
  color: var(--ink);
}
.statusbar strong { width: 251px; height: 21px; padding: 0 5px; font-family: var(--plain); line-height: 22px; color: #000; background: #5b93ef; }
.statusbar span { padding: 0 7px; }
.statusbar > span { border-left: 1px solid #a6bbd6; }
.statusbar strong + span { margin-left: 7px; }
.statusbar .user { margin-left: 2px; }
.statusbar .product { margin-left: 12px; }
.task {
  position: absolute;
  right: 118px;
  bottom: 0;
  display: flex;
  align-items: flex-end;
  gap: 1px;
  width: 106px;
  height: 30px;
  padding: 2px 3px 4px;
  color: #dfe3ee;
  background: linear-gradient(90deg, #000, #1c2a52 60%, #3f5aa3);
  border: solid #f4e800;
  border-width: 1px 2px 0 0;
}
.task svg { align-self: flex-start; }
.lang { position: absolute; right: 0; bottom: 0; display: flex; align-items: center; gap: 2px; width: 71px; height: 17px; padding-left: 2px; color: #000; background: #4665ab; }
.lang svg { width: 16px; height: 16px; }
.statusbar .lang span { padding: 0 2px; background: #a9c2e0; }
```
